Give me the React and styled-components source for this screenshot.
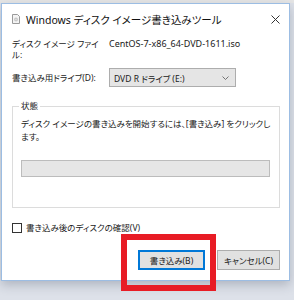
import React from 'react';
import styled, { createGlobalStyle } from 'styled-components';

const GlobalStyle = createGlobalStyle`
  html, body {
    margin: 0;
    padding: 0;
  }
  body {
    width: 294px;
    height: 300px;
    overflow: hidden;
    background: #dde1e9;
    font-family: "Noto Sans", "Noto Sans CJK JP", sans-serif;
    font-feature-settings: "palt";
    color: #1a1a1a;
  }
`;

const Page = styled.div`
  position: relative;
  width: 294px;
  height: 300px;
  padding: 3px 0 0 1px;
  box-sizing: border-box;
  background: linear-gradient(#e6e6e6 0, #e6e6e6 3px, #dde1e9 3px);
`;

const Dialog = styled.div`
  width: 289px;
  height: 278px;
  box-sizing: border-box;
  background: #ffffff;
  border: 1px solid #9cbde3;
  box-shadow: 0 4px 10px rgba(40, 50, 70, 0.25);
  display: flex;
  flex-direction: column;
`;

const TitleBar = styled.div`
  height: 30px;
  display: flex;
  align-items: center;
  padding: 0 9px 0 10px;
  gap: 6px;
  flex-shrink: 0;
`;

const TitleText = styled.div`
  flex: 1;
  font-size: 10.5px;
  color: #111;
  white-space: nowrap;
  padding-top: 1px;
`;

const CloseBtn = styled.div`
  width: 10px;
  height: 10px;
  display: flex;
  align-items: center;
  justify-content: center;
`;

const Body = styled.div`
  flex: 1;
  display: flex;
  flex-direction: column;
  padding: 4px 9px 0 10px;
  font-size: 8.5px;
`;

const FieldRow = styled.div`
  display: grid;
  grid-template-columns: 97px 1fr;
  align-items: ${(p) => (p.$center ? 'center' : 'start')};
  margin-bottom: ${(p) => p.$gap || 0}px;
`;

const Label = styled.div`
  line-height: 11px;
  white-space: nowrap;
`;

const Value = styled.div`
  line-height: 11px;
  font-size: 9px;
  padding-top: 0;
`;

const Select = styled.div`
  width: 127px;
  height: 19px;
  box-sizing: border-box;
  border: 1px solid #adadad;
  background: #e5e5e5;
  display: flex;
  align-items: center;
  justify-content: space-between;
  padding: 0 6px 0 4px;
`;

const GroupBox = styled.fieldset`
  margin: 14px 0 0 0;
  padding: 6px 8px 0 8px;
  height: 107px;
  box-sizing: border-box;
  border: 1px solid #dcdcdc;
  min-width: 0;
`;

const Legend = styled.legend`
  padding: 0 2px;
  margin-left: -2px;
  line-height: 10px;
`;

const StatusText = styled.div`
  line-height: 13px;
`;

const Progress = styled.div`
  margin-top: 17px;
  height: 17px;
  width: 249px;
  box-sizing: border-box;
  border: 1px solid #bcbcbc;
  background: #e6e6e6;
`;

const CheckRow = styled.label`
  display: flex;
  align-items: center;
  gap: 4px;
  margin-top: 14px;
  line-height: 11px;
`;

const CheckBox = styled.span`
  width: 10px;
  height: 10px;
  box-sizing: border-box;
  border: 1px solid #333;
  background: #fff;
`;

const ButtonRow = styled.div`
  display: flex;
  justify-content: flex-end;
  gap: 12px;
  margin-top: 17px;
`;

const Button = styled.div`
  width: ${(p) => p.$w}px;
  height: 20px;
  box-sizing: border-box;
  border: 1px solid ${(p) => (p.$primary ? '#0078d7' : '#adadad')};
  box-shadow: ${(p) => (p.$primary ? 'inset 0 0 0 1px #0078d7' : 'none')};
  background: #e1e1e1;
  display: flex;
  align-items: center;
  justify-content: center;
`;

const Highlight = styled.div`
  position: absolute;
  left: 121px;
  top: 234px;
  width: 95px;
  height: 57px;
  box-sizing: border-box;
  border: 6px solid #e81c25;
  pointer-events: none;
`;

function DiscIcon() {
  return (
    <svg width="8" height="10" viewBox="0 0 8 10">
      <path d="M0.5 0.5 H5.5 L7.5 2.5 V9.5 H0.5 Z" fill="#f4f4f4" stroke="#9a9a9a" />
      <circle cx="4" cy="5.5" r="2" fill="#c8c8c8" />
      <circle cx="4" cy="5.5" r="0.6" fill="#f4f4f4" />
    </svg>
  );
}

function CloseIcon() {
  return (
    <svg width="9" height="9" viewBox="0 0 9 9">
      <path d="M0.5 0.5 L8.5 8.5 M8.5 0.5 L0.5 8.5" stroke="#333" strokeWidth="1" />
    </svg>
  );
}

function Chevron() {
  return (
    <svg width="7" height="4" viewBox="0 0 7 4">
      <path d="M0.5 0.5 L3.5 3.5 L6.5 0.5" fill="none" stroke="#666" strokeWidth="0.9" />
    </svg>
  );
}

function App() {
  return (
    <Page>
      <GlobalStyle />
      <Dialog>
        <TitleBar>
          <DiscIcon />
          <TitleText>Windows ディスク イメージ書き込みツール</TitleText>
          <CloseBtn>
            <CloseIcon />
          </CloseBtn>
        </TitleBar>
        <Body>
          <FieldRow $gap={8}>
            <Label>
              ディスク イメージ ファイ
              <br />
              ル:
            </Label>
            <Value>CentOS-7-x86_64-DVD-1611.iso</Value>
          </FieldRow>
          <FieldRow $center>
            <Label>書き込み用ドライブ(D):</Label>
            <Select>
              <span>DVD R ドライブ (E:)</span>
              <Chevron />
            </Select>
          </FieldRow>
          <GroupBox>
            <Legend>状態</Legend>
            <StatusText>
              ディスク イメージの書き込みを開始するには、[書き込み] をクリックし
              <br />
              ます。
            </StatusText>
            <Progress />
          </GroupBox>
          <CheckRow>
            <CheckBox />
            書き込み後のディスクの確認(V)
          </CheckRow>
          <ButtonRow>
            <Button $primary $w={67}>書き込み(B)</Button>
            <Button $w={63}>キャンセル(C)</Button>
          </ButtonRow>
        </Body>
      </Dialog>
      <Highlight />
    </Page>
  );
}

export default App;
